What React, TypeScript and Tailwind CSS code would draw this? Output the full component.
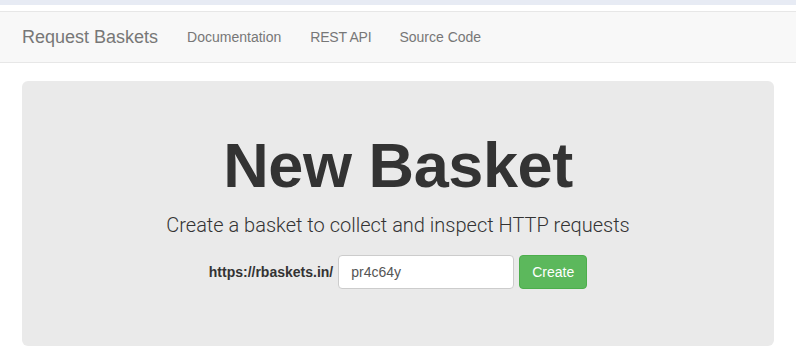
export default function App() {
  return (
    <div className="min-h-[357px] bg-white font-['Liberation_Sans',Arial,sans-serif] text-[#333]">
      {/* strip above the navbar */}
      <div className="h-[5px] bg-[#e7ebf4]" />
      <div className="h-[6px]" />

      {/* navbar */}
      <nav className="flex h-[52px] items-center border-y border-[#e7e7e7] bg-[#f8f8f8] px-[22px]">
        <span className="text-[18px] text-[#777]">Request Baskets</span>
        <ul className="ml-[29px] flex items-center gap-[28px] text-[14px] text-[#777]">
          <li>Documentation</li>
          <li className="ml-[1px] tracking-[-0.2px]">REST API</li>
          <li>Source Code</li>
        </ul>
      </nav>

      {/* jumbotron */}
      <div className="px-[22px] pt-[18px]">
        <div className="rounded-[6px] bg-[#eaeaea] px-[60px] pt-[50px] pb-[57px] text-center">
          <h1 className="mb-[10px] text-[63px] leading-[69px] font-bold tracking-[-0.4px] text-[#333]">New Basket</h1>
          <p className="mb-[15px] font-['Roboto',sans-serif] text-[20px] leading-[30px] font-light text-[#333]">
            Create a basket to collect and inspect HTTP requests
          </p>
          <form className="flex items-center justify-center gap-[5px]" onSubmit={(e) => e.preventDefault()}>
            <label className="text-[14px] font-bold text-[#333]">https://rbaskets.in/</label>
            <input
              className="h-[34px] w-[176px] rounded-[4px] border border-[#ccc] bg-white px-[12px] text-[14px] text-[#555] outline-none"
              defaultValue="pr4c64y"
            />
            <button
              type="submit"
              className="h-[34px] rounded-[4px] border border-[#4cae4c] bg-[#5cb85c] px-[12px] text-[14px] text-white"
            >
              Create
            </button>
          </form>
        </div>
      </div>
    </div>
  );
}
